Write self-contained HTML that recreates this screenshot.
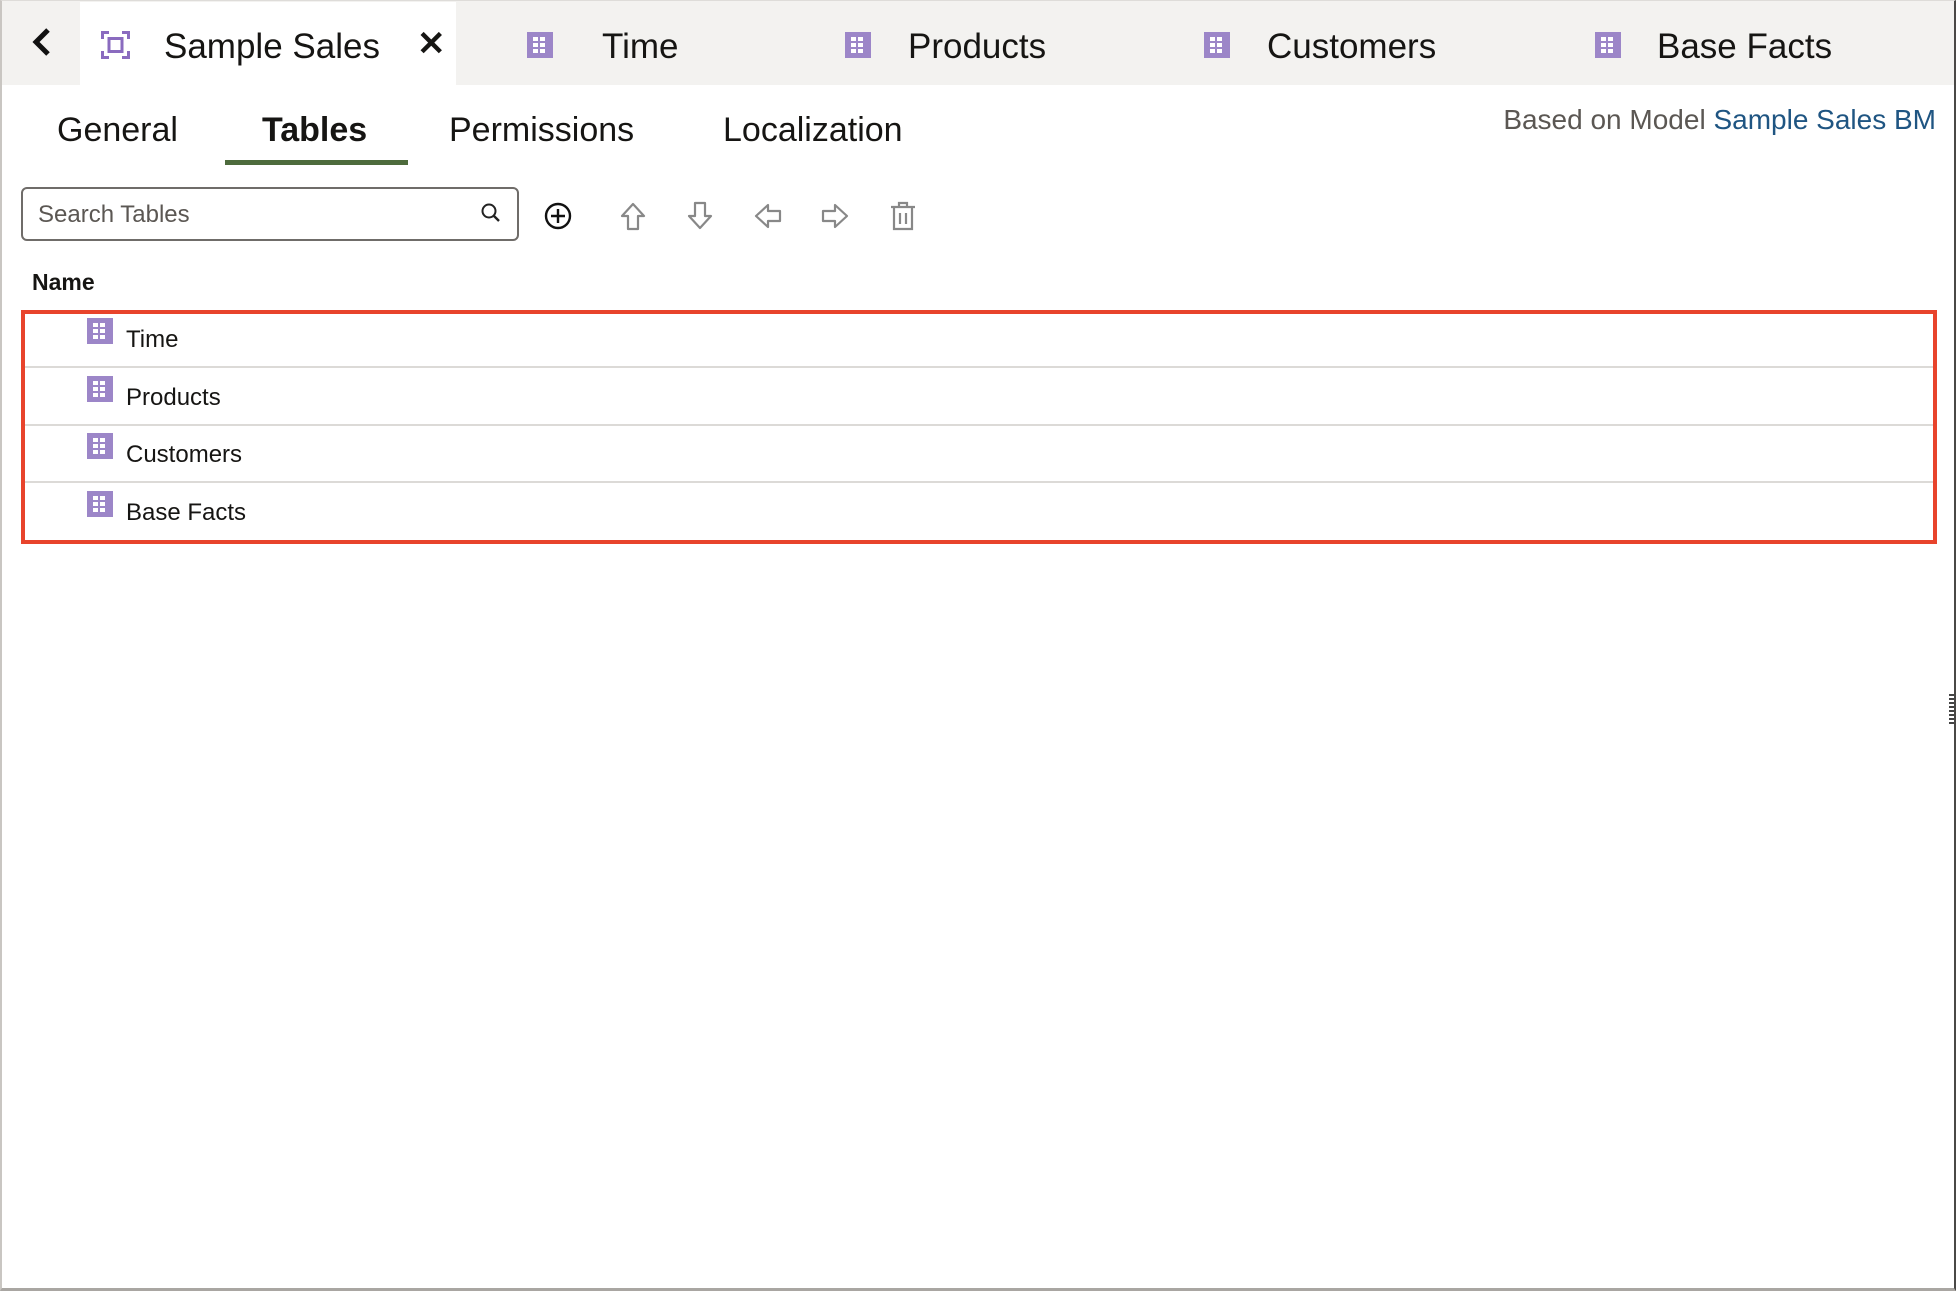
<!DOCTYPE html>
<html><head><meta charset="utf-8"><style>
*{margin:0;padding:0;box-sizing:border-box}
body{width:1958px;height:1292px;background:#fff;font-family:"Liberation Sans",sans-serif;position:relative;overflow:hidden;color:#161513}
.frame{position:absolute;left:0;top:0;width:1956px;height:1291px;border-left:2px solid #c9c6c2;border-bottom:3px solid #a9a6a2;border-right:2px solid #4a4846;border-top:1px solid #dedcd9}
.tabbar{position:absolute;left:2px;top:1px;width:1952px;height:84px;background:#f3f2f0}
.act{position:absolute;left:80px;top:2px;width:376px;height:83px;background:#fff}
.t{position:absolute;font-size:35px;top:27px;white-space:nowrap;color:#161513}
.ic{position:absolute}
.sub{position:absolute;top:111px;font-size:34px;color:#161513}
.row{position:absolute;left:25px;width:1908px;height:58px;border-bottom:2px solid #dcdad7}
.row span{position:absolute;left:101px;top:16px;font-size:24px}
.row svg{position:absolute;left:62px;top:8px}
</style></head><body>
<div class="tabbar"></div>
<div class="act"></div>
<svg class="ic" style="left:30px;top:26px" width="24" height="32" viewBox="0 0 24 32"><path d="M18 4 L6 16 L18 28" fill="none" stroke="#111" stroke-width="5"/></svg>
<svg class="ic" style="left:101px;top:31px" width="29" height="28" viewBox="0 0 29 28"><g fill="none" stroke="#8a6bbf" stroke-width="3"><path d="M1.5 8V1.5H8M21 1.5H27.5V8M27.5 20V26.5H21M8 26.5H1.5V20"/><rect x="8" y="7.5" width="13" height="13"/></g></svg>
<div class="t" style="left:164px">Sample Sales</div>
<div class="t" style="left:417px;top:24px;font-size:34px;font-weight:bold">✕</div>
<svg width="0" height="0" style="position:absolute"><defs><g id="tb"><rect x="0" y="0" width="26" height="26" fill="#9c86c8"/><g fill="#fff"><rect x="6" y="5" width="5" height="4"/><rect x="13" y="5" width="5" height="4"/><rect x="6" y="11" width="5" height="4"/><rect x="13" y="11" width="5" height="4"/><rect x="6" y="17" width="5" height="4"/><rect x="13" y="17" width="5" height="4"/></g></g></defs></svg>
<svg class="ic" style="left:527px;top:32px" width="26" height="26"><use href="#tb"/></svg>
<div class="t" style="left:602px">Time</div>
<svg class="ic" style="left:845px;top:32px" width="26" height="26"><use href="#tb"/></svg>
<div class="t" style="left:908px">Products</div>
<svg class="ic" style="left:1204px;top:32px" width="26" height="26"><use href="#tb"/></svg>
<div class="t" style="left:1267px">Customers</div>
<svg class="ic" style="left:1595px;top:32px" width="26" height="26"><use href="#tb"/></svg>
<div class="t" style="left:1657px">Base Facts</div>

<div class="sub" style="left:57px">General</div>
<div class="sub" style="left:262px;font-weight:bold">Tables</div>
<div class="sub" style="left:449px">Permissions</div>
<div class="sub" style="left:723px">Localization</div>
<div style="position:absolute;left:225px;top:160px;width:183px;height:5px;background:#4d6b3c"></div>
<div style="position:absolute;right:22px;top:104px;font-size:28px;color:#5b5753;white-space:nowrap">Based on Model <span style="color:#1f5582">Sample Sales BM</span></div>

<div style="position:absolute;left:21px;top:187px;width:498px;height:54px;border:2px solid #6f6c69;border-radius:6px"></div>
<div style="position:absolute;left:38px;top:201px;font-size:24px;color:#5b5753">Search Tables</div>
<svg class="ic" style="left:479px;top:201px" width="24" height="24" viewBox="0 0 24 24"><circle cx="10" cy="10" r="6.5" fill="none" stroke="#222" stroke-width="2"/><path d="M15 15L20 20" stroke="#222" stroke-width="2.4"/></svg>

<svg class="ic" style="left:543px;top:201px" width="30" height="30" viewBox="0 0 30 30"><circle cx="15" cy="15" r="12" fill="none" stroke="#111" stroke-width="2.4"/><path d="M15 8V22M8 15H22" stroke="#111" stroke-width="2.4"/></svg>
<svg class="ic" style="left:618px;top:201px" width="30" height="30" viewBox="0 0 30 30"><path d="M15 3L26 15H20V28H10V15H4Z" fill="none" stroke="#888" stroke-width="2.2" stroke-linejoin="round"/></svg>
<svg class="ic" style="left:685px;top:201px" width="30" height="30" viewBox="0 0 30 30"><path d="M15 27L26 15H20V2H10V15H4Z" fill="none" stroke="#888" stroke-width="2.2" stroke-linejoin="round"/></svg>
<svg class="ic" style="left:753px;top:201px" width="30" height="30" viewBox="0 0 30 30"><path d="M3 15L15 4V10H27V20H15V26Z" fill="none" stroke="#888" stroke-width="2.2" stroke-linejoin="round"/></svg>
<svg class="ic" style="left:820px;top:201px" width="30" height="30" viewBox="0 0 30 30"><path d="M27 15L15 4V10H3V20H15V26Z" fill="none" stroke="#888" stroke-width="2.2" stroke-linejoin="round"/></svg>
<svg class="ic" style="left:889px;top:200px" width="28" height="32" viewBox="0 0 28 32"><g fill="none" stroke="#888" stroke-width="2.2"><path d="M2 7H26M10 7V3H18V7M5 7V29H23V7M11 13V24M17 13V24"/></g></svg>

<div style="position:absolute;left:32px;top:269px;font-size:23px;font-weight:bold">Name</div>

<div style="position:absolute;left:21px;top:310px;width:1916px;height:234px;border:4px solid #e8442c"></div>
<div class="row" style="top:310px"><svg width="26" height="26"><use href="#tb"/></svg><span>Time</span></div>
<div class="row" style="top:368px"><svg width="26" height="26"><use href="#tb"/></svg><span>Products</span></div>
<div class="row" style="top:425px"><svg width="26" height="26"><use href="#tb"/></svg><span>Customers</span></div>
<div class="row" style="top:483px;border-bottom:none"><svg width="26" height="26"><use href="#tb"/></svg><span>Base Facts</span></div>

<div style="position:absolute;left:1949px;top:694px;width:5px;height:32px;background:repeating-linear-gradient(#444 0 2px,transparent 2px 4px)"></div>
<div class="frame"></div>
</body></html>
